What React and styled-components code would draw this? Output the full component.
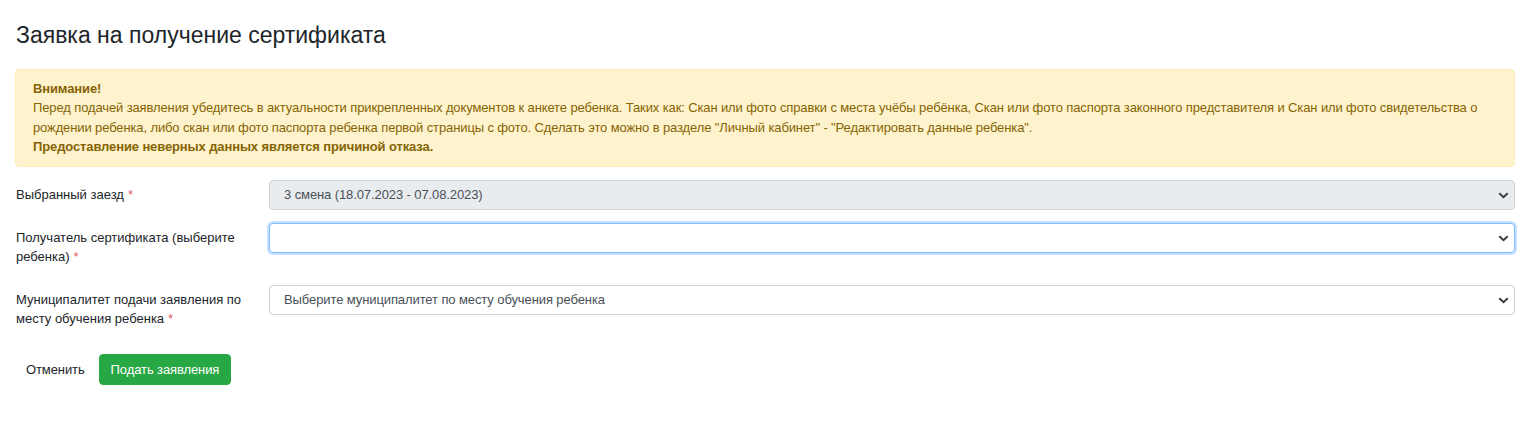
import React from "react";
import styled, { createGlobalStyle } from "styled-components";

const Global = createGlobalStyle`
  html, body { margin: 0; padding: 0; background: #fff; }
  body { font-family: "Liberation Sans", Arial, sans-serif; font-size: 13px; color: #212529; line-height: 1.5; }
  * { box-sizing: border-box; }
`;

const Page = styled.div`
  padding: 22px 9px 0 15px;
`;

const Title = styled.h1`
  margin: 0 0 19px 1px;
  font-size: 23px;
  font-weight: 400;
  line-height: 1.2;
  color: #212529;
`;

const Alert = styled.div`
  background: #fff3cd;
  border: 1px solid #ffeeba;
  border-radius: 4px;
  color: #856404;
  padding: 9px 17px;
  line-height: 19.5px;
  letter-spacing: -0.12px;
  margin-bottom: 13px;
`;

const Strong = styled.div`
  font-weight: 700;
`;

const Form = styled.form`
  display: flex;
  flex-direction: column;
`;

const Row = styled.div`
  display: flex;
  align-items: flex-start;
  margin-bottom: ${(p) => p.$mb}px;
`;

const Label = styled.label`
  width: 254px;
  flex: 0 0 254px;
  padding: 5px 14px 5px 1px;
  line-height: 19px;
  color: #212529;

  &::after {
    content: ${(p) => (p.$required ? '"*"' : '""')};
    margin-left: 4px;
    color: #dc3545;
    opacity: 0.8;
  }
`;

const SelectWrap = styled.div`
  position: relative;
  flex: 1;
`;

const Select = styled.select`
  appearance: none;
  -webkit-appearance: none;
  width: 100%;
  height: 30px;
  padding: 0 30px 0 14px;
  font-family: "Liberation Sans", Arial, sans-serif;
  font-size: 13px;
  letter-spacing: -0.1px;
  color: #495057;
  background: ${(p) => (p.disabled ? "#e9ecef" : "#fff")};
  border: 1px solid ${(p) => (p.$focus ? "#80bdff" : "#ced4da")};
  border-radius: 4px;
  box-shadow: ${(p) => (p.$focus ? "0 0 0 2px rgba(0,123,255,.22)" : "none")};
  outline: none;
  opacity: 1;
`;

const Chevron = styled.svg`
  position: absolute;
  right: 6px;
  top: 12px;
  pointer-events: none;
`;

const Actions = styled.div`
  display: flex;
  align-items: center;
  gap: 4px;
  margin-top: 21px;
  margin-left: 1px;
`;

const LinkButton = styled.button`
  background: none;
  border: none;
  font-family: "Liberation Sans", Arial, sans-serif;
  font-size: 13px;
  letter-spacing: -0.1px;
  color: #212529;
  padding: 0 10px;
  height: 31px;
  cursor: pointer;
`;

const PrimaryButton = styled.button`
  background: #28a745;
  border: 1px solid #28a745;
  border-radius: 4px;
  color: #fff;
  font-family: "Liberation Sans", Arial, sans-serif;
  font-size: 13px;
  letter-spacing: -0.1px;
  padding: 0 11px;
  height: 31px;
  cursor: pointer;
`;

const Field = ({ children, disabled, focus }) => (
  <SelectWrap>
    <Select disabled={disabled} $focus={focus} defaultValue="">
      {children}
    </Select>
    <Chevron width="11" height="7" viewBox="0 0 11 7">
      <path d="M1.3 1.3 L5.5 5.2 L9.7 1.3" fill="none" stroke="#343a40" strokeWidth="1.9" />
    </Chevron>
  </SelectWrap>
);

export default function App() {
  return (
    <>
      <Global />
      <Page>
        <Title>Заявка на получение сертификата</Title>
        <Alert>
          <Strong>Внимание!</Strong>
          <div>
            Перед подачей заявления убедитесь в актуальности прикрепленных документов к анкете ребенка. Таких как: Скан или фото справки с места учёбы ребёнка, Скан или фото паспорта законного представителя и Скан или фото свидетельства о рождении ребенка, либо скан или фото паспорта ребенка первой страницы с фото. Сделать это можно в разделе "Личный кабинет" - "Редактировать данные ребенка".
          </div>
          <Strong>Предоставление неверных данных является причиной отказа.</Strong>
        </Alert>
        <Form>
          <Row $mb={13}>
            <Label $required>Выбранный заезд</Label>
            <Field disabled>
              <option value="">3 смена (18.07.2023 - 07.08.2023)</option>
            </Field>
          </Row>
          <Row $mb={14}>
            <Label $required>Получатель сертификата (выберите ребенка)</Label>
            <Field focus>
              <option value=""></option>
            </Field>
          </Row>
          <Row $mb={0}>
            <Label $required>Муниципалитет подачи заявления по месту обучения ребенка</Label>
            <Field>
              <option value="">Выберите муниципалитет по месту обучения ребенка</option>
            </Field>
          </Row>
          <Actions>
            <LinkButton type="button">Отменить</LinkButton>
            <PrimaryButton type="button">Подать заявления</PrimaryButton>
          </Actions>
        </Form>
      </Page>
    </>
  );
}
